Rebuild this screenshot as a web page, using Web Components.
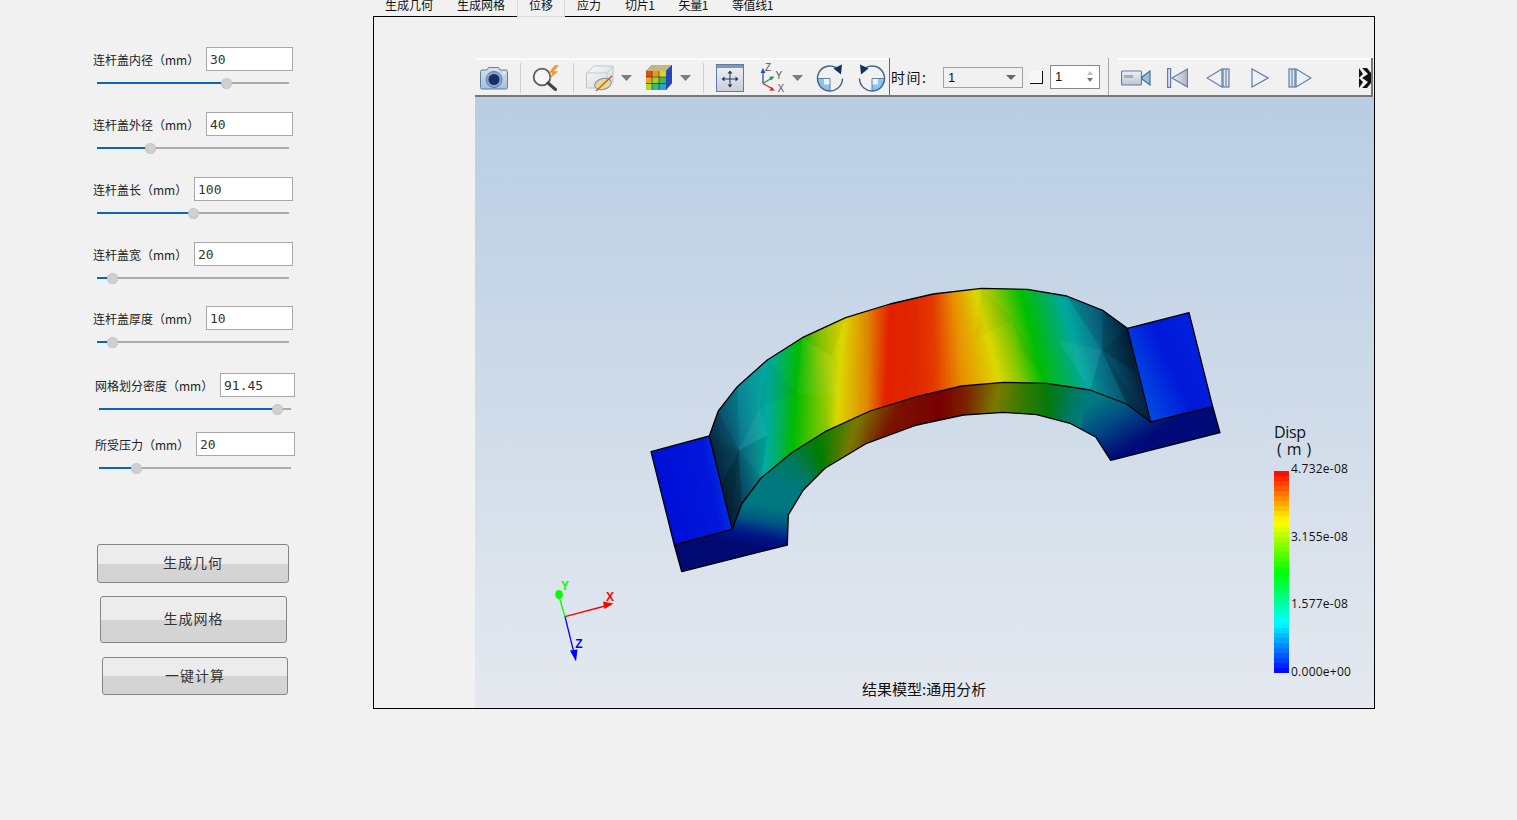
<!DOCTYPE html>
<html lang="zh"><head><meta charset="utf-8"><title>连杆盖</title>
<style>
html,body{margin:0;height:100%;background:#f1f1f1;overflow:hidden;font-family:"Noto Sans CJK SC","Noto Sans",sans-serif}
</style></head><body>
<x-app>
  <x-panel slot="panel">
    <x-param label="连杆盖内径（mm）" value="30" iw="87" pos="67.7" style="margin-top:47px"></x-param>
    <x-param label="连杆盖外径（mm）" value="40" iw="87" pos="28" style="margin-top:23px"></x-param>
    <x-param label="连杆盖长（mm）" value="100" iw="99" pos="50.5" style="margin-top:23px"></x-param>
    <x-param label="连杆盖宽（mm）" value="20" iw="99" pos="8" style="margin-top:23px"></x-param>
    <x-param label="连杆盖厚度（mm）" value="10" iw="87" pos="8" style="margin-top:22px"></x-param>
    <x-param label="网格划分密度（mm）" value="91.45" iw="75" pos="93" style="margin:25px 0 0 2px"></x-param>
    <x-param label="所受压力（mm）" value="20" iw="99" pos="19.5" style="margin:17px 0 0 2px"></x-param>
    <x-button style="margin:70px 0 0 4px;width:192px;height:39px">生成几何</x-button>
    <x-button style="margin:13px 0 0 7px;width:187px;height:47px">生成网格</x-button>
    <x-button style="margin:14px 0 0 9px;width:186px;height:38px">一键计算</x-button>
  </x-panel>
  <x-tabs slot="tabs" active="2" items="生成几何,生成网格,位移,应力,切片1,矢量1,等值线1"></x-tabs>
  <x-toolbar slot="toolbar"></x-toolbar>
  <x-viewport slot="view">
    <x-mesh></x-mesh>
    <x-triad></x-triad>
    <x-legend></x-legend>
    <x-caption>结果模型:通用分析</x-caption>
  </x-viewport>
</x-app>
<script>
const def=(name,css,html,init)=>{customElements.define(name,class extends HTMLElement{
  constructor(){super();this.attachShadow({mode:'open'})}
  connectedCallback(){const h=typeof html==='function'?html(this):html;this.shadowRoot.innerHTML=`<style>${css}</style>${h}`;init&&init(this)}
})};

def('x-app',`:host{display:flex;width:1517px;height:820px;background:#f1f1f1}
.left{width:373px;flex:none}
.main{width:1002px;flex:none;display:flex;flex-direction:column}
.tabs{display:block;height:17px;margin-bottom:-1px;position:relative;z-index:1}
.frame{box-sizing:border-box;height:693px;border:1px solid #000;padding:41px 0 0 101px;display:flex;flex-direction:column}`,
`<div class="left"><slot name="panel"></slot></div>
<div class="main"><div class="tabs"><slot name="tabs"></slot></div>
<div class="frame"><slot name="toolbar"></slot><slot name="view"></slot></div></div>`);

def('x-panel',`:host{display:flex;flex-direction:column;padding-left:93px;width:280px;box-sizing:border-box}`,`<slot></slot>`);

def('x-param',`:host{display:block;width:200px;height:42px;flex:none}
.row{display:flex;justify-content:space-between;align-items:center;height:24px}
label{font:12px/24px "Noto Sans CJK SC",sans-serif;color:#222;white-space:nowrap;padding-top:1px}
.inp{box-sizing:border-box;height:24px;background:#fff;border:1px solid #a8a8a8;font:13px/24px "DejaVu Sans Mono",monospace;color:#333;padding-left:3px}
x-slider{margin:6px 0 0 4px}`,
h=>`<div class="row"><label>${h.getAttribute('label')}</label><div class="inp" style="width:${h.getAttribute('iw')}px">${h.getAttribute('value')}</div></div>
<x-slider pos="${h.getAttribute('pos')}"></x-slider>`);

def('x-slider',`:host{display:flex;align-items:center;width:192px;height:12px}
.a{height:2px;background:#0a66b8}.b{height:2px;background:#ababab;flex:1}
.t{width:11px;height:11px;border-radius:50%;background:#d0d0d0;box-sizing:border-box;border:1px dotted #b8b8b8;flex:none;margin:0 -5.5px;position:relative}`,
h=>`<div class="a" style="width:${h.getAttribute('pos')}%"></div><div class="t"></div><div class="b"></div>`);

def('x-button',`:host{display:flex;align-items:center;justify-content:center;box-sizing:border-box;flex:none;border:1px solid #858585;border-radius:3px;padding-bottom:3px;
background:linear-gradient(#ececec 0,#ececec 51%,#d4d4d4 51%,#d4d4d4 100%);font:14px/1 "Noto Sans CJK SC",sans-serif;letter-spacing:1px;color:#333}`,`<slot></slot>`);

def('x-tabs',`:host{display:flex;height:17px;overflow:hidden;font:12px/10px "Noto Sans CJK SC",sans-serif;color:#111}
div{box-sizing:border-box;height:17px;padding:0 12px;white-space:nowrap}
.on{background:#f1f1f1;border:1px solid #d9d9d9;border-top:0;padding:0 11px}
.n{letter-spacing:-.4px}`,
h=>h.getAttribute('items').split(',').map((t,i)=>`<div class="${i==h.getAttribute('active')?'on':''} ${/\d/.test(t)?'n':''}">${t}</div>`).join(''));

const IC={
camera:[28,25,`<defs><linearGradient id="g" x2="0" y2="1"><stop offset="0" stop-color="#d6e2ef"/><stop offset="1" stop-color="#a9bfd6"/></linearGradient></defs>
<path d="M2 5h5l1.500-2.500h10L20 5h6a1.500 1.500 0 0 1 1.500 1.500v16A1.500 1.500 0 0 1 26 24H2a1.500 1.500 0 0 1-1.500-1.500v-16A1.500 1.500 0 0 1 2 5z" fill="url(#g)" stroke="#5f7fa6"/>
<circle cx="14" cy="14.500" r="8" fill="#8ea6c6" stroke="#5f7fa6"/><circle cx="14" cy="14.500" r="5.500" fill="#17306b"/><circle cx="24" cy="8" r="1" fill="#fff"/>`],
search:[30,26,`<circle cx="10" cy="12" r="8.300" fill="#f4f6f8" stroke="#5c5c5c" stroke-width="1.800"/><path d="M16 18l7.500 6.500" stroke="#444" stroke-width="3" stroke-linecap="round"/>
<path d="M23 0l-6 7.500 3.500.5-3.500 6.500 9-8-4-.5 5-5.500z" fill="#ee9a2c"/>`],
box:[28,27,`<defs><linearGradient id="g" x2="1" y2="1"><stop offset="0" stop-color="#fafafa"/><stop offset="1" stop-color="#d2d6de"/></linearGradient></defs>
<path d="M.5 9L8 2h19v15l-6 7H.5z" fill="url(#g)" stroke="#bcc2ce"/><path d="M.5 9H21v15M21 9l6-7" fill="none" stroke="#c4c9d4"/>
<ellipse cx="17" cy="20" rx="8.500" ry="5.500" fill="#e8d890" stroke="#7d8ea6" transform="rotate(-15 17 20)"/><path d="M10 27L26 12" stroke="#c8552a" stroke-width="1.300"/>`],
cube:[28,27,`<path d="M1 7L7 1h20v18l-6 7H1z" fill="#1c3f9c"/>
<path d="M1 7h6v6H1z" fill="#e8481c"/><path d="M7 7h7v6H7z" fill="#e89a20"/><path d="M14 7h7v6h-7z" fill="#d8d818"/>
<path d="M1 13h6v6.500H1z" fill="#e8a818"/><path d="M7 13h7v6.500H7z" fill="#9ed028"/><path d="M14 13h7v6.500h-7z" fill="#3cbc4c"/>
<path d="M1 19.500h6V26H1z" fill="#b0d828"/><path d="M7 19.500h7V26H7z" fill="#2cc080"/><path d="M14 19.500h7V26h-7z" fill="#28a0e0"/>
<path d="M1 7L7 1h6.500l-6 6zM7.500 7l6-6H20l-6 6zM14 7l6-6h7l-6 6z" fill="#c8b878"/><path d="M7 7v19M14 7v19M1 13h20M1 19.500h20" stroke="#1d2a50" stroke-width=".6"/>
<path d="M21 7l6-6v18l-6 7z" fill="#2848b8"/>`],
fit:[28,28,`<defs><linearGradient id="g" x2="0" y2="1"><stop offset="0" stop-color="#f0f2f6"/><stop offset="1" stop-color="#c9ced8"/></linearGradient></defs>
<rect x=".5" y=".5" width="27" height="27" fill="url(#g)" stroke="#5d7ba3"/><rect x="1" y="1" width="26" height="3" fill="#7f97b8"/>
<path d="M14 8v14M7 15h14" stroke="#1f3a62" stroke-width="1"/><path d="M14 6.500l-2.500 3h5zM14 23.500l-2.500-3h5zM5.500 15l3-2.500v5zM22.500 15l-3-2.500v5z" fill="#1f3a62"/>`],
axes:[26,30,`<path d="M3 20.500V8" stroke="#2850b0" stroke-width="1.300"/><path d="M3 5l-2.500 5h5z" fill="#2850b0"/>
<path d="M3 20.500l8-5" stroke="#1f9a4a" stroke-width="1.300"/><path d="M14.500 13.500l-5.500.2 2.200 3.800z" fill="#1f9a4a"/>
<path d="M3 20.500l8 4.500" stroke="#e02828" stroke-width="1.300"/><path d="M15 27.500l-5.500.2 2-3.900z" fill="#e02828"/>
<text x="5" y="7.500" font-family="Liberation Sans" font-size="10" fill="#555">Z</text><text x="15.500" y="15.500" font-family="Liberation Sans" font-size="10" fill="#555">Y</text><text x="17.500" y="28.500" font-family="Liberation Sans" font-size="10" fill="#555">X</text>`],
rotr:[28,28,`<path d="M14 14.500H1.500A12.500 12.500 0 0 0 14 27z" fill="#8cc4ee"/><path d="M8 14.500h6v6H8z" fill="#eaf4fb"/>
<path d="M20 3.500A12.500 12.500 0 1 0 26.500 14.500" fill="none" stroke="#46688a" stroke-width="1.500"/><path d="M1.500 14.500H14V27" fill="none" stroke="#46688a" stroke-width=".8"/>
<path d="M26 .5l-1 10-7.500-6z" fill="#14325e"/>`],
rotl:[28,28,`<path d="M14 14.500H26.500A12.500 12.500 0 0 1 14 27z" fill="#8cc4ee"/><path d="M14 14.500h6v6h-6z" fill="#eaf4fb"/>
<path d="M8 3.500A12.500 12.500 0 1 1 1.500 14.500" fill="none" stroke="#46688a" stroke-width="1.500"/><path d="M26.500 14.500H14V27" fill="none" stroke="#46688a" stroke-width=".8"/>
<path d="M2 .5l1 10 7.500-6z" fill="#14325e"/>`],
arrow:[11,6,`<path d="M0 0h11L5.500 6z" fill="#7d7d7d"/>`],
video:[30,16,`<defs><linearGradient id="g" x2="0" y2="1"><stop offset="0" stop-color="#eef1f5"/><stop offset="1" stop-color="#bcc6d2"/></linearGradient></defs>
<rect x=".5" y="1" width="20" height="14" rx="1" fill="url(#g)" stroke="#5f7fa6" stroke-width="1.200"/><rect x="3" y="5" width="9" height="3" fill="#a8aeb6"/>
<path d="M21 7l8-6v14l-8-6z" fill="#8fc0dc" stroke="#4d6f98" stroke-width="1.200"/>`],
first:[21,20,`<defs><linearGradient id="g"><stop offset="0" stop-color="#eef0f4"/><stop offset="1" stop-color="#aab4c0"/></linearGradient></defs>
<path d="M20.500 1v18L5 10z" fill="url(#g)" stroke="#5f7fa6" stroke-width="1.200"/><rect x=".6" y=".6" width="3" height="18.800" fill="#dde3ea" stroke="#5f7fa6" stroke-width="1.200"/>`],
prev:[24,20,`<path d="M16 1v18L1 10z" fill="#eef1f5" stroke="#5f7fa6" stroke-width="1.200"/><rect x="17" y="1" width="6" height="18" fill="#dfe4ea" stroke="#5f7fa6" stroke-width="1.200"/><path d="M20 1v18" stroke="#5f7fa6"/>`],
play:[18,20,`<path d="M1 1v18l16-9z" fill="#eef1f5" stroke="#5f7fa6" stroke-width="1.200"/>`],
next:[24,20,`<path d="M8 1v18l15-9z" fill="#eef1f5" stroke="#5f7fa6" stroke-width="1.200"/><rect x="1" y="1" width="6" height="18" fill="#dfe4ea" stroke="#5f7fa6" stroke-width="1.200"/><path d="M4 1v18" stroke="#5f7fa6"/>`],
more:[12,20,`<rect width="12" height="20" fill="#111"/><path d="M0 0l3 0 6 6-6 4 6 4-6 6H0l4-6-4-4 4-4zM5 0h3l4 5V0zM12 15l-4 5h4z" fill="#f4f4f4"/>`]
};
def('x-icon',`:host{display:block;flex:none;line-height:0}svg{display:block}`,h=>{const [w,ht,s]=IC[h.getAttribute('name')];return `<svg width="${w}" height="${ht}" viewBox="0 0 ${w} ${ht}">${s}</svg>`});

def('x-toolbar',`:host{display:flex;align-items:stretch;box-sizing:border-box;width:898px;height:39px;background:#f1f1f1;border-bottom:2px solid #777;border-right:2px solid #777;flex:none}
.sec{display:flex;align-items:center;border-top:2px solid #fbfbfb;flex:none}
.s1{width:414px}.s3{margin-left:8px;width:254px}
.sep{width:1px;height:30px;background:#cfcfcf;flex:none}
.dk{width:1px;background:#666;flex:none;align-self:stretch}
.sep2{width:1px;background:#a8a8a8;flex:none;align-self:stretch}
.sec2{display:flex;align-items:center;width:218px;flex:none}
.time{font:14px/1 "Noto Sans CJK SC",sans-serif;letter-spacing:1.5px;color:#111;margin-left:1px;width:38px;flex:none;white-space:nowrap}
.combo{box-sizing:border-box;width:80px;height:21px;margin:2px 0 0 14px;border:1px solid #a0a0a0;font:13px/19px "Liberation Sans",sans-serif;color:#111;padding-left:4px;display:flex;justify-content:space-between;align-items:center;flex:none}
.combo i{border:5px solid transparent;border-top:5px solid #666;border-bottom:0;margin-right:6px}
.chk{box-sizing:border-box;width:13px;height:13px;margin:2px 0 0 7px;border-right:1.500px solid #111;border-bottom:1.500px solid #111;background:#f7f7f7;flex:none}
.spin{box-sizing:border-box;width:50px;height:24px;margin-left:7px;border:1px solid #888;background:#fff;font:13px/22px "Liberation Sans",sans-serif;color:#111;padding-left:4px;display:flex;justify-content:space-between;align-items:center;flex:none}
.spin span{display:flex;flex-direction:column;gap:3px;margin-right:6px}
.spin b{display:block;width:0;height:0;border:3px solid transparent}
.up{border-bottom:4px solid #c0c0c0!important;border-top:0!important}.dn{border-top:4px solid #777!important;border-bottom:0!important}`,
()=>{const I=(n,m)=>`<x-icon name="${n}" style="margin-left:${m}px"></x-icon>`,S=m=>`<div class="sep" style="margin-left:${m}px"></div>`;
return `<div class="sec s1">${I('camera',5)}${S(12)}${I('search',11)}${S(11)}${I('box',12)}${I('arrow',7)}${I('cube',13)}${I('arrow',7)}${S(12)}${I('fit',12)}${I('axes',16)}${I('arrow',6)}${I('rotr',13)}${I('rotl',14)}</div>
<div class="dk"></div>
<div class="sec2"><div class="time">时间:</div><div class="combo">1<i></i></div><div class="chk"></div><div class="spin">1<span><b class="up"></b><b class="dn"></b></span></div></div>
<div class="sep2"></div>
<div class="sec s3">${I('video',4)}${I('first',16)}${I('prev',18)}${I('play',21)}${I('next',19)}${I('more',47)}</div>`});

def('x-viewport',`:host{display:block;position:relative;width:899px;height:611px;flex:none;background:linear-gradient(#b9cde3,#e5e9ef);overflow:hidden}`,`<slot></slot>`);

/* 3D result model, drawn in page coordinates */
const Z9=a=>a.map((v,i)=>i%2?v/3+280:v/3+640), Z10=a=>a.map((v,i)=>i%2?v/3+280:v/3+920);
const OUT=[[709.3,436],[718.3,411],[737.3,386.7],[767.3,360],[802.3,337.7],[845.7,317.7],[890,304],[933.3,294],[981.7,288.3],[1027.3,289.3],[1066.7,296],[1103.3,310.7],[1127.3,328.3]];
const RIDGE=[[732.3,529.3],[741.7,504],[760.7,478.3],[791.7,452.7],[825,431.7],[870,411],[916.7,396.7],[961.7,386],[1003.3,382.3],[1046.7,383.3],[1090,390],[1126.7,404],[1150.7,422]];
const LOW=[[788.3,515],[803.3,490],[825,468.3],[866.7,443.3],[916.7,425],[963.3,415],[1003.3,412.3],[1036.7,414.7],[1070,423.3],[1096,437.3]];
const TOP=[[709,732,'#0a3458'],[718,745,'#0a5876'],[737,755,'#0a8494'],[755,760,'#089c9a'],[768,765,'#00aca0'],[782,778,'#00b060'],[800,792,'#00ba00'],[820,827,'#90c800'],[843,837,'#dcd800'],[867,867,'#e08800'],[890,885,'#e42000'],[915,917,'#e02800'],[933,935,'#e43a00'],[953,963,'#e89000'],[975,1000,'#dcd800'],[992,1020,'#90c800'],[1020,1043,'#00be00'],[1045,1070,'#00ae60'],[1060,1087,'#00a8a0'],[1087,1107,'#0a7c92'],[1105,1125,'#085a7c'],[1117,1137,'#074268'],[1127,1150,'#062c50']];
const FRONT=[[760.7,803.3,'#007880'],[785,812,'#007a60'],[817,822,'#007c00'],[857,847,'#7a7a00'],[900,883,'#7a1400'],[940,940,'#780000'],[965,965,'#7a2000'],[1000,993,'#7a7a00'],[1025,1025,'#307c00'],[1050,1050,'#007a10'],[1075,1065,'#007a60'],[1090,1080,'#007a80']];
const at=(p,x)=>{for(let i=0;i<p.length-1;i++){if(x<=p[i+1][0]||i==p.length-2){const t=(x-p[i][0])/(p[i+1][0]-p[i][0]);return +(p[i][1]+t*(p[i+1][1]-p[i][1])).toFixed(2)}}};
const rgb=c=>[1,3,5].map(i=>parseInt(c.substr(i,2),16));
const mix=(a,b,t)=>{const A=rgb(a),B=rgb(b);return 'rgb('+A.map((v,i)=>Math.round(v+(B[i]-v)*t)).join(',')+')'};
/* painter's strips: each strip runs two steps forward and the next one covers its far half, so no seam shows */
const strips=(nodes,P,Q)=>{const sm=[];for(let i=0;i<nodes.length-1;i++){const[a0,b0,c0]=nodes[i],[a1,b1,c1]=nodes[i+1],n=10;
  for(let k=0;k<n;k++){const t=k/n;sm.push([a0+(a1-a0)*t,b0+(b1-b0)*t,mix(c0,c1,t+.5/n)])}}
  const L=nodes[nodes.length-1];sm.push([L[0],L[1],L[2]]);
  let s='';for(let i=0;i<sm.length-1;i++){const A=sm[i],B=sm[Math.min(i+2,sm.length-1)];
  s+=`<polygon points="${A[0]},${at(P,A[0])} ${B[0]},${at(P,B[0])} ${B[1]},${at(Q,B[1])} ${A[1]},${at(Q,A[1])}" fill="${A[2]}"/>`}return s};
const pl=p=>p.map(q=>q.join(',')).join(' ');
const F=[[Z9,[208,468,235,393,297,510],'#000',.2],[Z9,[208,468,297,510,245,610],'#000',.28],[Z9,[245,610,297,510,277,748],'#000',.42],[Z9,[297,510,305,672,277,748],'#000',.35],
[Z9,[235,393,292,320,297,510],'#000',.08],[Z9,[360,380,382,465,297,510],'#fff',.05],[Z9,[297,510,382,465,362,595],'#000',.08],[Z9,[297,510,362,595,305,672],'#000',.16],
[Z9,[487,173,575,230,470,340],'#fff',.04],[Z9,[382,240,360,380,470,340],'#000',.04],[Z9,[617,113,575,230,487,173],'#000',.04],[Z9,[575,230,600,340,470,340],'#fff',.04],
[Z10,[550,92,622,145,545,210],'#000',.28],[Z10,[622,145,650,280,545,210],'#000',.36],[Z10,[650,280,690,426,545,210],'#000',.22],[Z10,[545,210,690,426,620,372],'#000',.3],
[Z10,[545,210,620,372,510,330],'#000',.07],[Z10,[440,48,550,92,545,210],'#000',.12],[Z10,[415,180,545,210,510,330],'#fff',.05],[Z10,[280,120,305,220,385,308],'#000',.03],[Z10,[165,178,280,120,185,25],'#000',.03]];
def('x-mesh',`:host{position:absolute;left:0;top:0;display:block;width:899px;height:611px}svg{display:block}`,()=>{
  const top=strips(TOP,OUT,RIDGE),front=strips(FRONT,RIDGE,LOW);
  const fac=F.map(([z,p,c,o])=>{const q=z(p);let s='';for(let i=0;i<q.length;i+=2)s+=q[i].toFixed(1)+','+q[i+1].toFixed(1)+' ';return `<polygon points="${s}" fill="${c}" opacity="${o}"/>`}).join('');
  return `<svg width="899" height="611" viewBox="475 97 899 611">
<defs>
<linearGradient id="fl" gradientUnits="userSpaceOnUse" x1="770" y1="506" x2="762" y2="548"><stop offset="0" stop-color="#007880"/><stop offset=".35" stop-color="#005a84"/><stop offset=".75" stop-color="#001488"/><stop offset="1" stop-color="#000a70"/></linearGradient>
<linearGradient id="fr" gradientUnits="userSpaceOnUse" x1="1092" y1="402" x2="1124" y2="452"><stop offset="0" stop-color="#007a80"/><stop offset=".45" stop-color="#004c84"/><stop offset="1" stop-color="#000a78"/></linearGradient>
<linearGradient id="bl" gradientUnits="userSpaceOnUse" x1="660" y1="500" x2="735" y2="485"><stop offset="0" stop-color="#000ed8"/><stop offset=".7" stop-color="#0018dc"/><stop offset="1" stop-color="#0044e2"/></linearGradient>
<linearGradient id="br" gradientUnits="userSpaceOnUse" x1="1140" y1="390" x2="1205" y2="360"><stop offset="0" stop-color="#0048e4"/><stop offset=".55" stop-color="#0018d8"/><stop offset="1" stop-color="#0020dc"/></linearGradient>
</defs>
<polygon points="674.300,545 681.700,571.700 787.300,545 788.300,515 803.300,490 812,481.300 775,466.500 760.700,478.300 741.700,504 732.300,529.300" fill="url(#fl)"/>
<polygon points="1075,387.700 1090,390 1126.700,404 1150.700,422 1212.700,406.700 1220,432.700 1110.700,460.300 1096,437.300 1080,428.700 1070,423.300 1065,422" fill="url(#fr)"/>
${front}
${top}${fac}
<polygon points="651,451.700 709.300,436 732.300,529.300 674.300,545" fill="url(#bl)"/>
<polygon points="1127.300,328.300 1189,312.700 1212.700,406.700 1150.700,422" fill="url(#br)"/>
<g fill="none" stroke="#000" stroke-width="1.300" stroke-linejoin="round">
<polyline points="${pl(OUT)}"/><polyline points="${pl(RIDGE)}"/>
<polygon points="651,451.700 709.300,436 732.300,529.300 674.300,545"/><polygon points="1127.300,328.300 1189,312.700 1212.700,406.700 1150.700,422"/>
<polyline points="674.300,545 681.700,571.700 787.300,545 788.300,515 ${pl(LOW.slice(1))} 1110.700,460.300 1220,432.700 1212.700,406.700"/>
</g></svg>`});

def('x-triad',`:host{position:absolute;left:65px;top:470px;width:90px;height:110px;display:block}svg{display:block;overflow:visible}
text{font:700 12px "Liberation Sans",sans-serif;text-anchor:middle}`,
`<svg width="90" height="110" viewBox="540 567 90 110">
<path d="M565 616.700L607 605.500" stroke="#f00" stroke-width="1.300"/><path d="M613.500 603.500l-10.500-2 1.500 7.500z" fill="#f00"/>
<path d="M565 616.700L559.500 598" stroke="#0f0" stroke-width="1.300"/><ellipse cx="559" cy="594.500" rx="3.800" ry="4.500" fill="#0f0"/>
<path d="M565 616.700L574 653" stroke="#00f" stroke-width="1.300"/><path d="M576 661.500l-6-11 7.500-1z" fill="#00f"/>
<text x="610" y="601" fill="#f00">X</text><text x="565" y="590" fill="#0f0">Y</text><text x="579" y="648" fill="#00f">Z</text></svg>`);

def('x-legend',`:host{position:absolute;left:799px;top:326px;display:block;width:90px;color:#111}
.t{font:16px/18px "Open Sans",sans-serif;height:18px;letter-spacing:-.3px}
.u{font:16px/16px "Open Sans",sans-serif;height:18px;padding-left:3px;white-space:pre;letter-spacing:.4px}
.g{display:flex;margin-top:2px}
.bar{width:15px;height:202px;margin-top:10px;flex:none}
.l{margin:1px 0 0 2px;height:217px;display:flex;flex-direction:column;justify-content:space-between;font:12px/14px "Open Sans",sans-serif;letter-spacing:.25px;white-space:nowrap}`,
()=>{const st=[[0,0,255],[0,255,255],[0,255,0],[255,255,0],[255,0,0]],N=40;let g=[];
 for(let i=0;i<N;i++){const v=(i+.5)/N*4,k=Math.min(3,Math.floor(v)),t=v-k,c=st[k].map((a,j)=>Math.round(a+(st[k+1][j]-a)*t)).join(',');
 g.push(`rgb(${c}) ${(i/N*100).toFixed(2)}% ${((i+1)/N*100).toFixed(2)}%`)}
 return `<div class="t">Disp</div><div class="u">( m )</div><div class="g"><div class="bar" style="background:linear-gradient(to top,${g.join(',')})"></div>
 <div class="l"><span>4.732e-08</span><span>3.155e-08</span><span>1.577e-08</span><span>0.000e+00</span></div></div>`});

def('x-caption',`:host{position:absolute;left:387px;top:583px;display:block;font:15px/18px "Noto Sans CJK SC",sans-serif;color:#111;white-space:nowrap}`,`<slot></slot>`);
</script>
</body></html>
